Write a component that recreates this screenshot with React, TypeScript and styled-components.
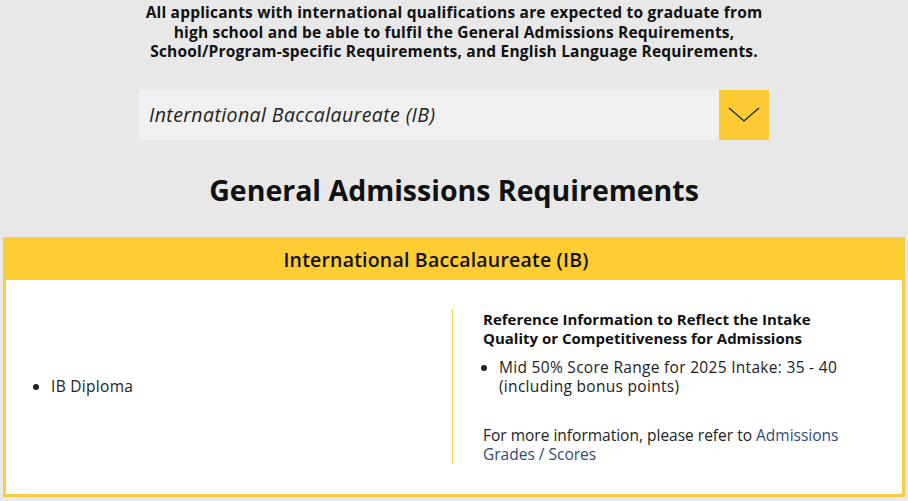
import React from "react";
import styled, { createGlobalStyle } from "styled-components";

const Global = createGlobalStyle`
  html, body { margin: 0; padding: 0; }
  body {
    background: #e8e8e9;
    font-family: "Open Sans", "Noto Sans", sans-serif;
    color: #111;
  }
`;

const Page = styled.div`
  display: flex;
  flex-direction: column;
  align-items: center;
  padding: 3px 3px 4px;
`;

const Intro = styled.p`
  margin: 0;
  width: 635px;
  text-align: center;
  font-weight: 700;
  font-size: 15.5px;
  letter-spacing: 0.2px;
  line-height: 19.5px;
  color: #111;
`;

const Select = styled.div`
  margin-top: 28px;
  width: 630px;
  height: 50px;
  display: flex;
  background: #f0f0f0;
`;

const SelectValue = styled.div`
  flex: 1;
  display: flex;
  align-items: center;
  padding-left: 10px;
  font-style: italic;
  font-size: 19.5px;
  letter-spacing: 0.4px;
  color: #222;
`;

const SelectButton = styled.div`
  width: 50px;
  height: 50px;
  background: #fccb33;
  display: flex;
  align-items: center;
  justify-content: center;
`;

const Heading = styled.h2`
  margin: 30px 0 0;
  font-size: 28.5px;
  line-height: 40px;
  font-weight: 700;
  color: #111;
`;

const Card = styled.section`
  margin-top: 27px;
  align-self: stretch;
  border: 3px solid #f6cd45;
  background: #fff;
`;

const CardHeader = styled.div`
  background: #fdcd33;
  height: 40px;
  display: flex;
  align-items: center;
  justify-content: center;
  padding-right: 36px;
  font-size: 19.5px;
  letter-spacing: 0.2px;
  font-weight: 600;
  color: #111;
`;

const CardBody = styled.div`
  display: grid;
  grid-template-columns: 447px 1fr;
  padding: 30px 0 30px;
`;

const LeftCol = styled.div`
  display: flex;
  align-items: center;
  border-right: 1px solid #f2cf4a;
`;

const RightCol = styled.div`
  padding: 0 45px 0 30px;
`;

const List = styled.ul<{ $indent: number }>`
  margin: 0;
  padding-left: ${(p) => p.$indent}px;
  font-size: 15.5px;
  letter-spacing: 0.3px;
  line-height: 19px;
  color: #222;
`;

const RefTitle = styled.h4`
  margin: 0 0 10px;
  font-size: 15px;
  line-height: 19px;
  font-weight: 700;
  color: #111;
`;

const Para = styled.p`
  margin: 30px 0 0;
  font-size: 15.5px;
  line-height: 19px;
  color: #222;
`;

const Link = styled.a`
  color: #2e4a78;
  text-decoration: none;
`;

export default function App() {
  return (
    <>
      <Global />
      <Page>
        <Intro>
          All applicants with international qualifications are expected to graduate from high school and be able to fulfil the General Admissions Requirements, School/Program-specific Requirements, and English Language Requirements.
        </Intro>
        <Select>
          <SelectValue>International Baccalaureate (IB)</SelectValue>
          <SelectButton>
            <svg width="32" height="16" viewBox="0 0 32 16" fill="none">
              <polyline points="1,1 16,14 31,1" stroke="#222" strokeWidth="1.3" />
            </svg>
          </SelectButton>
        </Select>
        <Heading>General Admissions Requirements</Heading>
        <Card>
          <CardHeader>International Baccalaureate (IB)</CardHeader>
          <CardBody>
            <LeftCol>
              <List $indent={45}>
                <li>IB Diploma</li>
              </List>
            </LeftCol>
            <RightCol>
              <RefTitle>Reference Information to Reflect the Intake Quality or Competitiveness for Admissions</RefTitle>
              <List $indent={16}>
                <li>Mid 50% Score Range for 2025 Intake: 35 - 40 (including bonus points)</li>
              </List>
              <Para>
                For more information, please refer to <Link href="#">Admissions Grades / Scores</Link>
              </Para>
            </RightCol>
          </CardBody>
        </Card>
      </Page>
    </>
  );
}
